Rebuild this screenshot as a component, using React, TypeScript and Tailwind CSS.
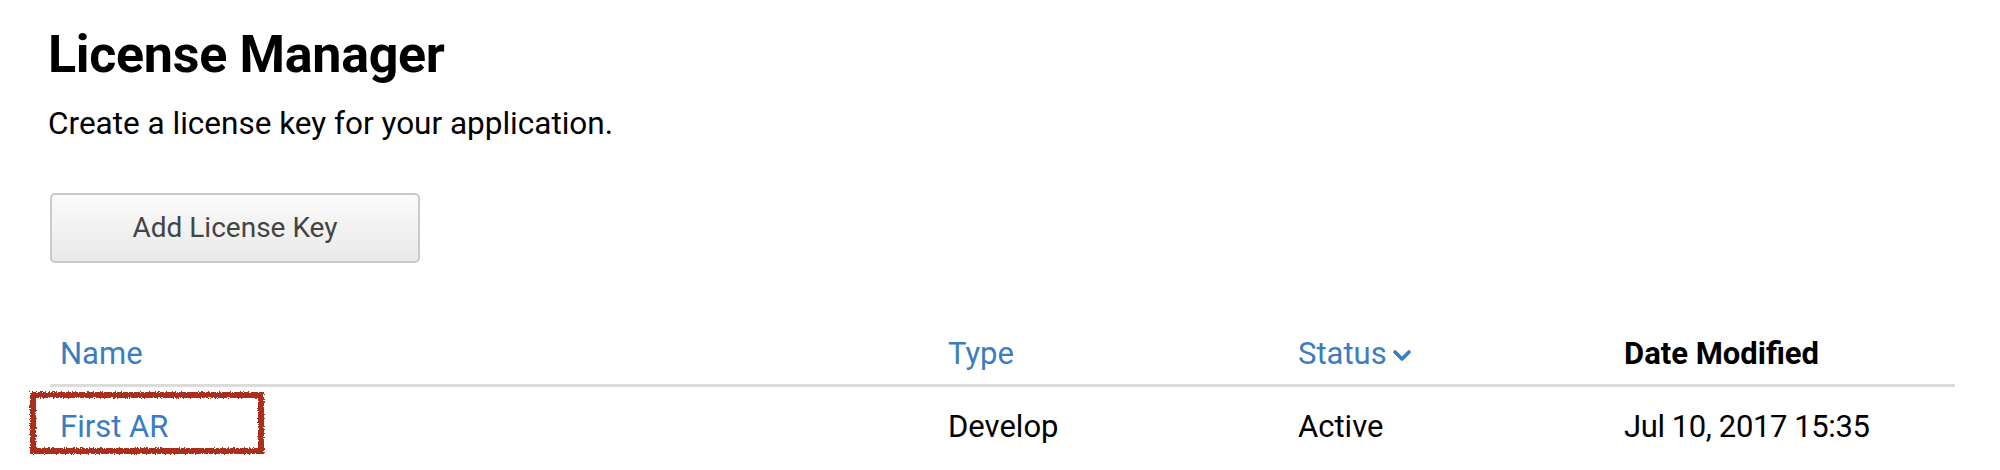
const font = { fontFamily: "Roboto, 'Liberation Sans', sans-serif" };

function Chevron() {
  return (
    <svg width="18" height="12" viewBox="0 0 18 12" className="mt-[4px]" aria-hidden>
      <polyline points="2,2 9,9 16,2" fill="none" stroke="currentColor" strokeWidth="3.6" strokeLinecap="round" strokeLinejoin="round" />
    </svg>
  );
}

function ScribbleBox() {
  return (
    <svg className="pointer-events-none absolute left-[-22px] top-[3px] h-[66px] w-[238px]" viewBox="0 0 238 66" aria-hidden>
      <defs>
        <filter id="rough" x="-10%" y="-20%" width="120%" height="140%">
          <feTurbulence type="fractalNoise" baseFrequency="0.8" numOctaves="2" seed="5" />
          <feDisplacementMap in="SourceGraphic" scale="4" />
        </filter>
      </defs>
      <rect x="5" y="5" width="228" height="56" fill="none" stroke="#a92e1c" strokeWidth="6" filter="url(#rough)" />
    </svg>
  );
}

export default function App() {
  return (
    <div className="min-h-screen bg-white text-black" style={font}>
      <div className="pl-[48px] pr-[45px] pt-[25px]">
        <h1 className="text-[52px] font-bold leading-[60px] tracking-[-0.3px]">License Manager</h1>
        <p className="mt-[20px] text-[31.5px] leading-[38px]">Create a license key for your application.</p>

        <button className="ml-[2px] mt-[50px] flex h-[70px] w-[370px] items-center justify-center rounded-[5px] border-2 border-[#cacaca] bg-gradient-to-b from-[#fbfbfb] to-[#e9e9e9] text-[28px] text-[#444]">
          Add License Key
        </button>

        <div className="relative ml-[2px] mt-[72px]">
          <div className="grid grid-cols-[888px_350px_326px_1fr] border-b-[3px] border-[#dcdcdc] pb-[11px] text-[31px] leading-[38px]">
            <div className="pl-[10px] text-[#3b7dc1]">Name</div>
            <div className="pl-[10px] text-[#3b7dc1]">Type</div>
            <div className="flex items-center gap-[6px] pl-[10px] text-[#3b7dc1]">
              Status
              <Chevron />
            </div>
            <div className="pl-[10px] font-bold">Date Modified</div>
          </div>
          <div className="relative grid grid-cols-[888px_350px_326px_1fr] pt-[21px] text-[31px] leading-[38px]">
            <div className="pl-[10px] text-[#3b7dc1]">First AR</div>
            <div className="pl-[10px]">Develop</div>
            <div className="pl-[10px]">Active</div>
            <div className="pl-[10px] tracking-[-0.4px]">Jul 10, 2017 15:35</div>
            <ScribbleBox />
          </div>
        </div>
      </div>
    </div>
  );
}
